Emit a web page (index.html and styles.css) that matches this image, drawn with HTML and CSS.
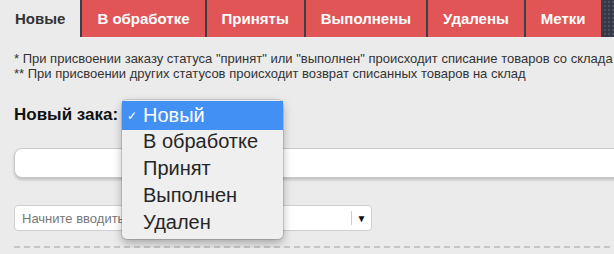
FILE: index.html
```html
<!DOCTYPE html>
<html lang="ru">
<head>
    <meta charset="UTF-8">
    <title>Заказы</title>
    <link rel="stylesheet" href="styles.css">
</head>
<body>

    <!-- Tabs -->
    <div class="tabs">
        <a href="#" class="tab active">Новые</a>
        <a href="#" class="tab">В обработке</a>
        <a href="#" class="tab">Приняты</a>
        <a href="#" class="tab">Выполнены</a>
        <a href="#" class="tab">Удалены</a>
        <a href="#" class="tab">Метки</a>
        <div class="tabs-rest"></div>
    </div>

    <div class="content">
        <p class="note">
            * При присвоении заказу статуса "принят" или "выполнен" происходит списание товаров со склада<br>
            ** При присвоении других статусов происходит возврат списанных товаров на склад
        </p>

        <!-- New order status -->
        <div class="order-row">
            <span class="order-label">Новый зака:</span>

            <!-- opened select menu -->
            <ul class="select-menu">
                <li class="selected"><span class="check">&#10003;</span>Новый</li>
                <li>В обработке</li>
                <li>Принят</li>
                <li>Выполнен</li>
                <li>Удален</li>
            </ul>
        </div>

        <input type="text" class="big-input">

        <div class="product-select">
            <span class="product-placeholder">Начните вводить название или код товара</span>
            <span class="product-sep"></span>
            <span class="product-arrow">&#9660;</span>
        </div>

        <div class="dashed"></div>
    </div>

</body>
</html>
```

FILE: styles.css
```css
/* General */
body {
    font-family: 'Liberation Sans', Arial, Helvetica, sans-serif;
    margin: 0;
    background-color: #ebebeb;
    color: #333;
    overflow: hidden;
}

/* Tabs */
.tabs {
    display: flex;
    height: 37px;
}

.tab {
    display: block;
    flex-shrink: 0;
    padding: 0 15px;
    line-height: 37px;
    font-size: 15px;
    font-weight: bold;
    white-space: nowrap;
    color: #fff;
    text-decoration: none;
    background-color: #e25556;
    border-right: 2px solid #3b3e47;
}

.tab.active {
    background-color: #ebebeb;
    color: #333;
}

.tabs-rest {
    flex: 1;
    background-color: #353845;
    background-image: radial-gradient(#4d5262 0.8px, transparent 1px);
    background-size: 4px 4px;
}

/* Content */
.content {
    padding: 0 0 0 14px;
}

.note {
    margin: 14px 0 0;
    font-size: 13px;
    line-height: 15px;
    color: #333;
    white-space: nowrap;
}

.order-row {
    position: relative;
    display: flex;
    align-items: center;
    margin-top: 22px;
    height: 24px;
}

.order-label {
    font-size: 17px;
    font-weight: bold;
    color: #111;
}

.select-menu {
    position: absolute;
    left: 108px;
    top: -3px;
    width: 161px;
    margin: 0;
    padding: 1px 0 3px;
    list-style: none;
    background: #efefef;
    border-radius: 5px;
    box-shadow: 0 0 0 1px rgba(0, 0, 0, 0.12), 0 4px 10px rgba(0, 0, 0, 0.3);
}

.select-menu li {
    position: relative;
    height: 27px;
    line-height: 27px;
    padding-left: 21px;
    font-size: 20px;
    color: #262626;
}

.select-menu li.selected {
    height: 29px;
    line-height: 29px;
    margin-bottom: -2px;
    background: #4290f3;
    color: #fff;
}

.check {
    position: absolute;
    left: 5px;
    top: 1px;
    font-size: 12px;
}

.big-input {
    display: block;
    box-sizing: border-box;
    width: calc(100% + 20px);
    height: 30px;
    margin-top: 21px;
    border: 1px solid #c8c8c8;
    border-radius: 8px;
    background: #fff;
    box-shadow: 0 2px 3px rgba(0, 0, 0, 0.18);
}

.product-select {
    display: flex;
    align-items: center;
    box-sizing: border-box;
    width: 358px;
    height: 26px;
    margin-top: 27px;
    padding-left: 7px;
    border: 1px solid #cfcfcf;
    border-radius: 4px;
    background: #fff;
}

.product-placeholder {
    flex: 1;
    font-size: 13px;
    color: #777;
}

.product-sep {
    width: 1px;
    height: 14px;
    background: #ccc;
}

.product-arrow {
    width: 19px;
    text-align: center;
    font-size: 10px;
    color: #111;
}

.dashed {
    height: 2px;
    margin-top: 15px;
    background-image: repeating-linear-gradient(to right, #c6c6c6 0 6px, transparent 6px 10px);
}
```
